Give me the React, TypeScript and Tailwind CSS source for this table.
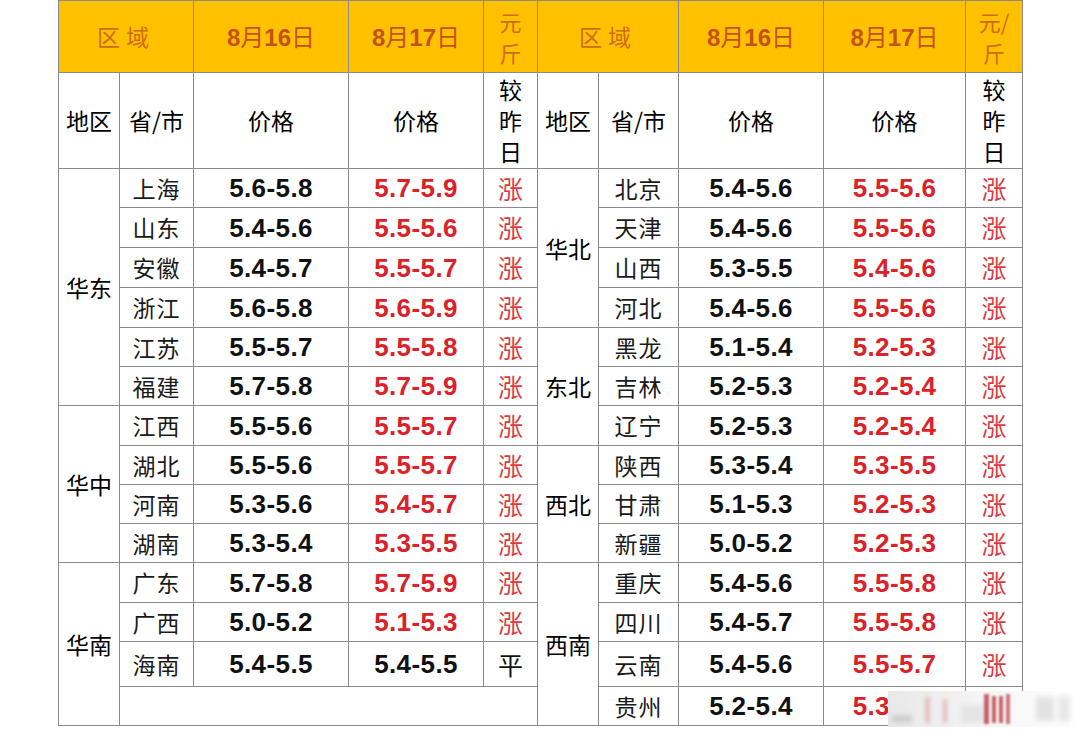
import React from "react";

type Row = { prov: string; d16: string; d17: string; trend: string };
type Group = { region: string; rows: Row[]; pad?: number };

const left: Group[] = [
  {
    region: "华东",
    rows: [
      { prov: "上海", d16: "5.6-5.8", d17: "5.7-5.9", trend: "涨" },
      { prov: "山东", d16: "5.4-5.6", d17: "5.5-5.6", trend: "涨" },
      { prov: "安徽", d16: "5.4-5.7", d17: "5.5-5.7", trend: "涨" },
      { prov: "浙江", d16: "5.6-5.8", d17: "5.6-5.9", trend: "涨" },
      { prov: "江苏", d16: "5.5-5.7", d17: "5.5-5.8", trend: "涨" },
      { prov: "福建", d16: "5.7-5.8", d17: "5.7-5.9", trend: "涨" },
    ],
  },
  {
    region: "华中",
    rows: [
      { prov: "江西", d16: "5.5-5.6", d17: "5.5-5.7", trend: "涨" },
      { prov: "湖北", d16: "5.5-5.6", d17: "5.5-5.7", trend: "涨" },
      { prov: "河南", d16: "5.3-5.6", d17: "5.4-5.7", trend: "涨" },
      { prov: "湖南", d16: "5.3-5.4", d17: "5.3-5.5", trend: "涨" },
    ],
  },
  {
    region: "华南",
    rows: [
      { prov: "广东", d16: "5.7-5.8", d17: "5.7-5.9", trend: "涨" },
      { prov: "广西", d16: "5.0-5.2", d17: "5.1-5.3", trend: "涨" },
      { prov: "海南", d16: "5.4-5.5", d17: "5.4-5.5", trend: "平" },
    ],
    pad: 1,
  },
];

const right: Group[] = [
  {
    region: "华北",
    rows: [
      { prov: "北京", d16: "5.4-5.6", d17: "5.5-5.6", trend: "涨" },
      { prov: "天津", d16: "5.4-5.6", d17: "5.5-5.6", trend: "涨" },
      { prov: "山西", d16: "5.3-5.5", d17: "5.4-5.6", trend: "涨" },
      { prov: "河北", d16: "5.4-5.6", d17: "5.5-5.6", trend: "涨" },
    ],
  },
  {
    region: "东北",
    rows: [
      { prov: "黑龙", d16: "5.1-5.4", d17: "5.2-5.3", trend: "涨" },
      { prov: "吉林", d16: "5.2-5.3", d17: "5.2-5.4", trend: "涨" },
      { prov: "辽宁", d16: "5.2-5.3", d17: "5.2-5.4", trend: "涨" },
    ],
  },
  {
    region: "西北",
    rows: [
      { prov: "陕西", d16: "5.3-5.4", d17: "5.3-5.5", trend: "涨" },
      { prov: "甘肃", d16: "5.1-5.3", d17: "5.2-5.3", trend: "涨" },
      { prov: "新疆", d16: "5.0-5.2", d17: "5.2-5.3", trend: "涨" },
    ],
  },
  {
    region: "西南",
    rows: [
      { prov: "重庆", d16: "5.4-5.6", d17: "5.5-5.8", trend: "涨" },
      { prov: "四川", d16: "5.4-5.7", d17: "5.5-5.8", trend: "涨" },
      { prov: "云南", d16: "5.4-5.6", d17: "5.5-5.7", trend: "涨" },
      { prov: "贵州", d16: "5.2-5.4", d17: "5.3-5.5", trend: "涨" },
    ],
  },
];

type Cell =
  | { kind: "region"; text: string; span: number }
  | { kind: "row"; row: Row }
  | { kind: "empty" };

function flatten(groups: Group[]): Cell[][] {
  const out: Cell[][] = [];
  groups.forEach((g) => {
    const span = g.rows.length + (g.pad ?? 0);
    g.rows.forEach((r, i) => {
      const cells: Cell[] = [];
      if (i === 0) cells.push({ kind: "region", text: g.region, span });
      cells.push({ kind: "row", row: r });
      out.push(cells);
    });
    for (let p = 0; p < (g.pad ?? 0); p++) out.push([{ kind: "empty" }]);
  });
  return out;
}

const cjk = "font-['Noto_Sans_CJK_SC','Noto_Sans',sans-serif]";
const num = "font-['Liberation_Sans',Arial,sans-serif]";
const bd = "border border-[#8a8a8a] p-0";

function Side({ cells }: { cells: Cell[] }) {
  return (
    <>
      {cells.map((c, i) => {
        if (c.kind === "region")
          return (
            <td key={i} rowSpan={c.span} className={`${bd} ${cjk} text-center text-[23px] text-black`}>
              {c.text}
            </td>
          );
        if (c.kind === "empty") return <td key={i} colSpan={4} className={bd} />;
        const up = c.row.trend === "涨";
        return (
          <React.Fragment key={i}>
            <td className={`${bd} ${cjk} text-center text-[23px] tracking-[1px] text-[#1a1a1a]`}>{c.row.prov}</td>
            <td className={`${bd} ${num} text-center text-[26px] leading-none font-bold tracking-[0.4px] text-[#111]`}>{c.row.d16}</td>
            <td
              className={`${bd} ${num} text-center text-[26px] leading-none font-bold tracking-[0.4px] ${up ? "text-[#db2129]" : "text-[#111]"}`}
            >
              {c.row.d17}
            </td>
            <td className={`${bd} ${cjk} text-center text-[25px] leading-none ${up ? "text-[#dc3a40]" : "text-[#111]"}`}>{c.row.trend}</td>
          </React.Fragment>
        );
      })}
    </>
  );
}

function HeadTop({ slash }: { slash: boolean }) {
  return (
    <>
      <th colSpan={2} className={`${bd} ${cjk} font-normal text-[23px] tracking-[6px] text-[#cf6c16]`}>区域</th>
      <th className={`${bd} ${num} font-bold text-[24px] text-[#c4521a]`}>
        8<span className={`${cjk} font-normal`}>月</span>16<span className={`${cjk} font-normal`}>日</span>
      </th>
      <th className={`${bd} ${num} font-bold text-[24px] text-[#c4521a]`}>
        8<span className={`${cjk} font-normal`}>月</span>17<span className={`${cjk} font-normal`}>日</span>
      </th>
      <th className={`${bd} ${cjk} font-normal text-[22px] leading-[31px] text-[#cf6c16]`}>
        {slash ? "元/" : "元"}
        <br />斤
      </th>
    </>
  );
}

function HeadSub() {
  return (
    <>
      <th className={`${bd} ${cjk} font-normal text-[23px] text-black`}>地区</th>
      <th className={`${bd} ${cjk} font-normal text-[23px] text-black`}>省/市</th>
      <th className={`${bd} ${cjk} font-normal text-[23px] text-black`}>价格</th>
      <th className={`${bd} ${cjk} font-normal text-[23px] text-black`}>价格</th>
      <th className={`${bd} ${cjk} font-normal text-[23px] leading-[31px] text-black`}>
        较<br />昨<br />日
      </th>
    </>
  );
}

// blurred watermark lying over the last row
function Watermark() {
  return (
    <div className="absolute left-[888px] top-[691px] w-[192px] h-[36px] pointer-events-none flex items-center bg-gradient-to-r from-[#e8e8e8] via-[#f5f5f5] to-white">
      <div className="flex items-end gap-[14px] h-[28px] w-[96px] pl-[4px] blur-[2px]">
        <div className="w-[22px] h-[8px] bg-[#cfcfcf]" />
        <div className="w-[4px] h-[26px] bg-[#e0a0a4]" />
        <div className="w-[4px] h-[24px] bg-[#e6b4b8]" />
        <div className="w-[26px] h-[18px] bg-[#e4e4e4]" />
      </div>
      <div className="flex items-center gap-[3px] h-[30px] blur-[0.8px]">
        <div className="w-[5px] h-[30px] bg-[#b8323a]/75" />
        <div className="w-[4px] h-[27px] bg-[#b8323a]/75" />
        <div className="w-[4px] h-[27px] bg-[#b8323a]/75" />
        <div className="w-[4px] h-[30px] bg-[#b8323a]/65" />
      </div>
      <div className="flex items-center gap-[4px] ml-[26px] blur-[2.5px]">
        <div className="w-[18px] h-[24px] bg-[#e2e2e2]" />
        <div className="w-[12px] h-[26px] bg-[#e8e8e8]" />
      </div>
    </div>
  );
}

export default function App() {
  const l = flatten(left);
  const r = flatten(right);
  const heights = [39, 40, 40, 40, 39, 39, 40, 39, 39, 39, 40, 39, 45, 39];

  return (
    <div className="relative w-[1080px] h-[731px] overflow-hidden bg-white">
      <div className="pl-[58px]">
        <table className="table-fixed border-collapse w-[964px]">
          <colgroup>
            <col className="w-[61px]" />
            <col className="w-[74px]" />
            <col className="w-[155px]" />
            <col className="w-[135px]" />
            <col className="w-[54px]" />
            <col className="w-[61px]" />
            <col className="w-[80px]" />
            <col className="w-[145px]" />
            <col className="w-[142px]" />
            <col className="w-[57px]" />
          </colgroup>
          <thead>
            <tr className="h-[72px] bg-[#ffc000]">
              <HeadTop slash={false} />
              <HeadTop slash={true} />
            </tr>
            <tr className="h-[96px]">
              <HeadSub />
              <HeadSub />
            </tr>
          </thead>
          <tbody>
            {heights.map((h, i) => (
              <tr key={i} style={{ height: h }}>
                <Side cells={l[i]} />
                <Side cells={r[i]} />
              </tr>
            ))}
          </tbody>
        </table>
      </div>
      <Watermark />
    </div>
  );
}
